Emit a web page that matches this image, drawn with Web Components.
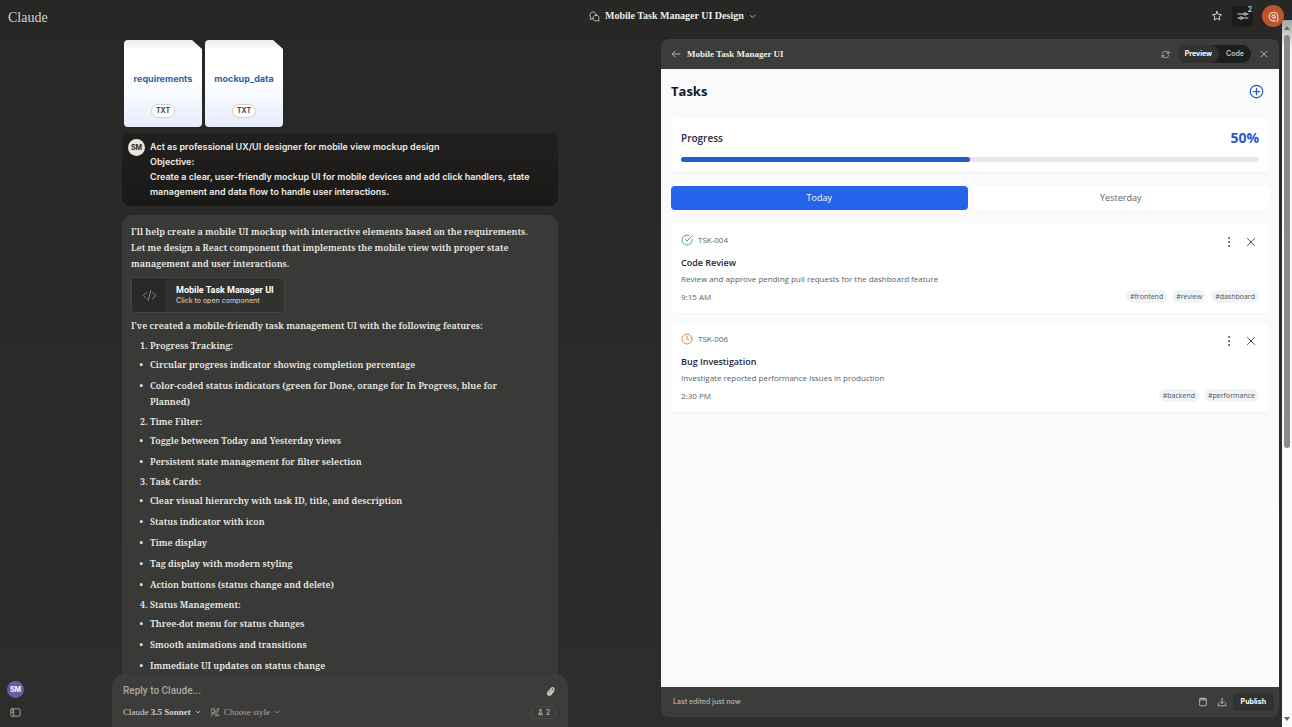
<!DOCTYPE html>
<html lang="en">
<head>
<meta charset="utf-8">
<meta name="viewport" content="width=device-width, initial-scale=1">
<title>Mobile Task Manager UI Design</title>
<style>
  :root {
    --serif: "Noto Serif", "Liberation Serif", serif;
    --title: "Liberation Serif", serif;
    --sans: Inter, "Liberation Sans", sans-serif;
    --app: "Open Sans", "Noto Sans", sans-serif;
    --text: #eeece6;
    --muted: #a9a7a0;
    --surface: #3c3c3a;
    --blue: #2563eb;
  }
  body {
    margin: 0;
    height: 100vh;
    overflow: hidden;
    color: var(--text);
    font: 500 9px/15px var(--sans);
    background: linear-gradient(#272725, #2d2d2b);
  }
</style>
</head>
<body>
<app-shell>
  <top-bar slot="top" heading="Mobile Task Manager UI Design"></top-bar>
  <side-rail slot="side"></side-rail>
  <chat-thread slot="chat">
    <file-card name="requirements" slot="files"></file-card>
    <file-card name="mockup_data" slot="files"></file-card>
    <user-message initials="SM">Act as professional UX/UI designer for mobile view mockup design<br>Objective:<br>Create a clear, user-friendly mockup UI for mobile devices and add click handlers, state management and data flow to handle user interactions.</user-message>
    <assistant-message></assistant-message>
    <reply-box slot="composer"></reply-box>
  </chat-thread>
  <artifact-panel slot="panel" heading="Mobile Task Manager UI">
    <task-app>
      <task-item code="TSK-004" status="done" heading="Code Review" time="9:15 AM" tags="frontend review dashboard">Review and approve pending pull requests for the dashboard feature</task-item>
      <task-item code="TSK-006" status="progress" heading="Bug Investigation" time="2:30 PM" tags="backend performance">Investigate reported performance issues in production</task-item>
    </task-app>
  </artifact-panel>
  <scroll-rail slot="scroll"></scroll-rail>
</app-shell>

<script>
const ICONS = {
  chats: '<path d="M8 17l-5 1 1-4a7 7 0 1 1 12-5"/><path d="M15 9a6 6 0 0 1 6 9l1 4-4-1a6.500 6.500 0 0 1-9-3.500A6.500 6.500 0 0 1 15 9z"/>',
  down: '<path d="M4 8l8 8 8-8"/>',
  star: '<path d="M12 3l2.700 5.800 6.300.7-4.700 4.200 1.300 6.300-5.600-3.200L6.400 20l1.300-6.300L3 9.500l6.300-.7z"/>',
  sliders: '<path d="M2 8h11M19 8h3M2 16h3M11 16h11"/><circle cx="16" cy="8" r="2.500"/><circle cx="8" cy="16" r="2.500"/>',
  chatMark: '<path d="M18 20.500a1.500 1.500 0 0 0 2-1.500v-7a8 8 0 1 0-8 8h3"/><circle cx="12" cy="12" r="3"/><path d="M15 12v3"/>',
  back: '<path d="M21 12H3M10 5l-7 7 7 7"/>',
  refresh: '<path d="M3 10a9 9 0 0 1 16-3l2 2M21 4v5h-5M21 14a9 9 0 0 1-16 3l-2-2M3 20v-5h5"/>',
  close: '<path d="M5 5l14 14M19 5L5 19"/>',
  plus: '<circle cx="12" cy="12" r="10"/><path d="M12 7v10M7 12h10"/>',
  done: '<path d="M22 11v1a10 10 0 1 1-6-9.100"/><path d="M22 4L12 14l-3-3"/>',
  progress: '<circle cx="12" cy="12" r="10"/><path d="M12 6v6l4 2"/>',
  dots: '<g fill="currentColor"><circle cx="12" cy="4" r="1"/><circle cx="12" cy="12" r="1"/><circle cx="12" cy="20" r="1"/></g>',
  code: '<path d="M7 7l-5 5 5 5M17 7l5 5-5 5M14 4l-4 16"/>',
  clip: '<path d="M18 12l-6 7a4 4 0 0 1-6-5l8-9a3 3 0 0 1 5 4l-8 9a1.500 1.500 0 0 1-2-2l6-7"/>',
  style: '<path d="M4 10V4h6v5M3 22c4-8 9-14 18-19l-3 9h-6M3 14h7M13 21h9M10 17h9"/>',
  flask: '<path d="M9 3h6M10 3v7l-5 10h14l-5-10V3M8 15h8"/>',
  sidebar: '<rect x="2" y="4" width="20" height="16" rx="2"/><path d="M8 4v16M4 8h2M4 12h2"/>',
  copy: '<rect x="4" y="4" width="16" height="17" rx="1"/><path d="M4 7h16M8 3h8"/>',
  download: '<path d="M12 3v12M7 11l5 5 5-5M3 15v6h18v-6"/>',
};

const icon = (name, size = 12, stroke = 2) => `
  <svg viewBox="0 0 24 24" width="${size}" height="${size}" fill="none" stroke="currentColor"
    stroke-width="${stroke}" stroke-linecap="round" stroke-linejoin="round" aria-hidden="true">${ICONS[name]}</svg>`;

const BASE = `
  *, *::before { box-sizing: border-box; }
  button, input { font: inherit; color: inherit; border: 0; background: none; padding: 0; margin: 0; }
  button { display: inline-flex; align-items: center; justify-content: center; cursor: pointer; }
  svg { display: block; flex: none; }
  p, h1, h2, h3, ul, ol { margin: 0; padding: 0; font: inherit; }
`;

class BaseElement extends HTMLElement {
  connectedCallback() {
    this.attachShadow({ mode: 'open' });
    this.shadowRoot.innerHTML = `<style>${BASE}</style>${this.render()}`;
  }
  attr(name) {
    return this.getAttribute(name) || '';
  }
}

customElements.define('app-shell', class extends BaseElement {
  render() {
    return `
      <style>
        :host { display: flex; flex-direction: column; height: 100vh; position: relative; }
        .body { flex: 1; min-height: 0; display: flex; padding-right: 13px; }
        .left { flex: 661; min-width: 0; display: flex; }
        .side { width: 112px; flex: none; display: flex; }
        .chat { flex: 1; min-width: 0; display: flex; padding-right: 93px; }
        .panel { flex: 618; min-width: 0; display: flex; padding: 7px 0 10px; }
        ::slotted(*) { flex: 1; min-width: 0; }
        ::slotted([slot="top"]) { flex: none; z-index: 2; }
      </style>
      <slot name="top"></slot>
      <div class="body">
        <div class="left">
          <div class="side"><slot name="side"></slot></div>
          <div class="chat"><slot name="chat"></slot></div>
        </div>
        <div class="panel"><slot name="panel"></slot></div>
      </div>
      <slot name="scroll"></slot>
    `;
  }
});

customElements.define('top-bar', class extends BaseElement {
  render() {
    return `
      <style>
        :host { display: block; }
        header {
          display: grid;
          grid-template-columns: 11fr auto 10fr;
          align-items: center;
          height: 32px;
          padding: 0 8px;
        }
        .brand { font: 400 14px/20px var(--title); color: #d5d3cc; text-decoration: none; padding-top: 3px; }
        .title { gap: 5px; font: 700 10px/16px var(--title); }
        .title svg { color: #c9c7c0; }
        .actions { display: flex; justify-content: flex-end; align-items: center; gap: 9px; color: #d5d3cc; }
        .tools { position: relative; width: 21px; height: 21px; border-radius: 4px; background: #1c1c1a; }
        .badge { position: absolute; top: 0; right: 1px; font-size: 7px; line-height: 8px; font-weight: 600; }
        .me { width: 22px; height: 22px; border-radius: 50%; background: #b9562d; color: #f0d9cc; }
      </style>
      <header>
        <a class="brand" href="#">Claude</a>
        <button class="title">${icon('chats', 11)}<span>${this.attr('heading')}</span>${icon('down', 7, 3)}</button>
        <div class="actions">
          <button aria-label="Star chat">${icon('star', 12)}</button>
          <button class="tools" aria-label="Chat controls">${icon('sliders', 12)}<span class="badge">2</span></button>
          <button class="me" aria-label="Account">${icon('chatMark', 13)}</button>
        </div>
      </header>
    `;
  }
});

customElements.define('side-rail', class extends BaseElement {
  render() {
    return `
      <style>
        :host { display: flex; flex-direction: column; justify-content: flex-end; align-items: flex-start; }
        nav { display: flex; flex-direction: column; align-items: center; gap: 9px; padding: 0 0 9px 7px; }
        .user { width: 17px; height: 17px; border-radius: 50%; background: #6a5aa8; color: #fff; font: 700 7px/17px var(--sans); }
        .toggle { color: var(--muted); }
      </style>
      <nav>
        <button class="user">SM</button>
        <button class="toggle" aria-label="Open sidebar">${icon('sidebar', 11)}</button>
      </nav>
    `;
  }
});

customElements.define('chat-thread', class extends BaseElement {
  render() {
    return `
      <style>
        :host { display: flex; flex-direction: column; }
        .scroll { flex: 1; min-height: 0; overflow: hidden; padding: 8px 10px 0; }
        .files { display: flex; gap: 3px; padding-left: 2px; margin-bottom: 6px; }
      </style>
      <div class="scroll">
        <div class="files"><slot name="files"></slot></div>
        <slot></slot>
      </div>
      <slot name="composer"></slot>
    `;
  }
});

customElements.define('file-card', class extends BaseElement {
  render() {
    return `
      <style>
        :host { display: block; }
        button {
          flex-direction: column;
          justify-content: space-between;
          width: 78px;
          height: 87px;
          padding: 31px 4px 9px;
          border-radius: 4px;
          background: linear-gradient(#ebebe9, #fff 12%, #fff 45%, #e6edfa);
          clip-path: polygon(0 0, 68px 0, 100% 9px, 100% 100%, 0 100%);
        }
        .name { color: #1f66a8; font: 700 9px/15px var(--sans); }
        .type {
          padding: 0 4px;
          border: 1px solid #cfcfcb;
          border-radius: 7px;
          background: #fff;
          color: #4b4a46;
          font: 700 7px/12px var(--sans);
        }
      </style>
      <button><span class="name">${this.attr('name')}</span><span class="type">TXT</span></button>
    `;
  }
});

customElements.define('user-message', class extends BaseElement {
  render() {
    return `
      <style>
        :host {
          display: flex;
          align-items: flex-start;
          gap: 5px;
          padding: 6px;
          margin-bottom: 9px;
          border-radius: 8px;
          background: linear-gradient(#21201e, #1a1917);
          font-weight: 600;
        }
        .avatar {
          flex: none;
          width: 17px;
          height: 17px;
          border-radius: 50%;
          background: #e8e6e0;
          color: #262624;
          text-align: center;
          font: 700 7px/17px var(--sans);
        }
        p { padding-bottom: 1px; }
      </style>
      <span class="avatar">${this.attr('initials')}</span>
      <p><slot></slot></p>
    `;
  }
});

const FEATURES = [
  ['Progress Tracking:', [
    'Circular progress indicator showing completion percentage',
    'Color-coded status indicators (green for Done, orange for In Progress, blue for Planned)',
  ]],
  ['Time Filter:', [
    'Toggle between Today and Yesterday views',
    'Persistent state management for filter selection',
  ]],
  ['Task Cards:', [
    'Clear visual hierarchy with task ID, title, and description',
    'Status indicator with icon',
    'Time display',
    'Tag display with modern styling',
    'Action buttons (status change and delete)',
  ]],
  ['Status Management:', [
    'Three-dot menu for status changes',
    'Smooth animations and transitions',
    'Immediate UI updates on status change',
  ]],
];

customElements.define('assistant-message', class extends BaseElement {
  render() {
    const list = FEATURES.map(([title, points]) => `
      <li>${title}<ul>${points.map((point) => `<li>${point}</li>`).join('')}</ul></li>`).join('');
    return `
      <style>
        :host {
          display: block;
          padding: 9px 30px 30px 9px;
          border-radius: 10px 10px 0 0;
          background: #393937;
          font: 600 9px/16px var(--serif);
        }
        .artifact {
          display: flex;
          width: 154px;
          height: 36px;
          margin: 5px 0;
          border: 1px solid #454542;
          border-radius: 4px;
          overflow: hidden;
          background: #31312f;
          text-align: left;
        }
        .mark { display: flex; align-items: center; justify-content: center; width: 34px; align-self: stretch; background: #282826; color: #c9c7c0; }
        .label { flex: 1; padding-left: 10px; }
        .label b { display: block; font: 700 9px/11px Roboto, sans-serif; color: #fff; white-space: nowrap; }
        .label small { display: block; font: 500 7px/10px var(--sans); color: #c3c1ba; }
        ol { padding-left: 19px; margin-top: 4px; }
        ol > li { margin-top: 4px; }
        ul { margin-top: 3px; list-style: "•   "; }
        ul li + li { margin-top: 5px; }
      </style>
      <p>I'll help create a mobile UI mockup with interactive elements based on the requirements. Let me design a React component that implements the mobile view with proper state management and user interactions.</p>
      <button class="artifact">
        <span class="mark">${icon('code', 15, 1)}</span>
        <span class="label"><b>Mobile Task Manager UI</b><small>Click to open component</small></span>
      </button>
      <p>I've created a mobile-friendly task management UI with the following features:</p>
      <ol>${list}</ol>
    `;
  }
});

customElements.define('reply-box', class extends BaseElement {
  render() {
    return `
      <style>
        :host { display: block; }
        form { padding: 9px 12px 7px 11px; border-radius: 12px 12px 0 0; background: var(--surface); }
        .row { display: flex; align-items: center; height: 16px; }
        .row + .row { margin-top: 5px; gap: 9px; font: 700 9px/16px var(--title); }
        input { flex: 1; min-width: 0; outline: 0; font: 500 10px/16px Roboto, sans-serif; }
        input::placeholder { color: var(--muted); opacity: 1; }
        .row button { gap: 4px; }
        .model { color: #d5d3cc; }
        .model span { font-weight: 400; }
        .style { color: var(--muted); font-weight: 400; }
        .count { margin-left: auto; padding: 0 5px; border: 1px solid #4a4a47; border-radius: 4px; color: var(--muted); font: 600 7px/11px var(--sans); }
        .row .count { gap: 2px; }
        .clip { color: #c9c7c0; }
      </style>
      <form>
        <div class="row">
          <input type="text" aria-label="Reply" placeholder="Reply to Claude...">
          <button type="button" class="clip" aria-label="Attach file">${icon('clip', 11, 3)}</button>
        </div>
        <div class="row">
          <button type="button" class="model"><div><span>Claude</span> 3.5 Sonnet</div>${icon('down', 6, 3)}</button>
          <button type="button" class="style">${icon('style', 10)}Choose style${icon('down', 6, 3)}</button>
          <button type="button" class="count" aria-label="Experiments">${icon('flask', 7, 3)}2</button>
        </div>
      </form>
    `;
  }
});

customElements.define('artifact-panel', class extends BaseElement {
  render() {
    return `
      <style>
        :host { display: flex; flex-direction: column; border-radius: 8px; background: var(--surface); overflow: hidden; }
        header, footer { display: flex; align-items: center; height: 30px; padding: 0 10px; flex: none; }
        h2 { flex: 1; margin-left: 6px; font: 700 9px/16px var(--title); }
        header button { color: #c9c7c0; }
        .switch { display: flex; height: 18px; margin: 0 8px; border-radius: 9px; background: #1e1e1c; font: 600 7px/18px var(--sans); }
        .switch button { padding: 0 7px; border-radius: 9px; }
        .switch .on { background: #32322f; color: #fff; font-weight: 700; }
        main { flex: 1; min-height: 0; overflow: hidden; background: #f9fafc; color: #1f2937; }
        footer { padding: 0 5px 0 12px; gap: 9px; font: 600 7px/16px var(--sans); color: var(--muted); }
        footer p { flex: 1; }
        footer button { color: #c9c7c0; }
        footer .publish { height: 18px; padding: 0 8px; margin-left: -3px; border-radius: 4px; background: #31312f; color: #fff; font-weight: 700; }
      </style>
      <header>
        <button aria-label="Back">${icon('back', 10)}</button>
        <h2>${this.attr('heading')}</h2>
        <button aria-label="Refresh">${icon('refresh', 9)}</button>
        <div class="switch">
          <button class="on" aria-pressed="true">Preview</button>
          <button aria-pressed="false">Code</button>
        </div>
        <button aria-label="Close">${icon('close', 10)}</button>
      </header>
      <main><slot></slot></main>
      <footer>
        <p>Last edited just now</p>
        <button aria-label="Copy">${icon('copy', 10)}</button>
        <button aria-label="Download">${icon('download', 10)}</button>
        <button class="publish">Publish</button>
      </footer>
    `;
  }
});

customElements.define('task-app', class extends BaseElement {
  render() {
    return `
      <style>
        :host { display: block; padding: 10px; font: 400 9px/16px var(--app); }
        .head { display: flex; align-items: center; justify-content: space-between; height: 24px; }
        h1 { font: 700 13px/20px var(--app); color: #0f1729; }
        .add { margin-right: 5px; color: #2a5ac7; }
        .progress { margin-top: 15px; padding: 10px; border-radius: 5px; background: #fff; box-shadow: 0 1px 2px rgba(15, 23, 42, 0.04); }
        .line { display: flex; align-items: center; justify-content: space-between; height: 20px; margin-bottom: 9px; }
        .line h2 { font: 600 10px/16px var(--app); }
        .line output { font: 700 14px/20px var(--app); color: #2a5ac7; }
        .bar { height: 5px; border-radius: 3px; background: #e5e7eb; }
        .bar div { width: 50%; height: 5px; border-radius: 3px; background: #2459cf; }
        .tabs { display: flex; gap: 5px; margin: 14px 0; }
        .tabs button { flex: 1; height: 24px; border-radius: 4px; background: #fff; color: #5b6470; }
        .tabs .on { background: var(--blue); color: #fff; }
        .list { display: flex; flex-direction: column; gap: 10px; }
      </style>
      <div class="head">
        <h1>Tasks</h1>
        <button class="add" aria-label="Add task">${icon('plus', 15)}</button>
      </div>
      <section class="progress">
        <div class="line"><h2>Progress</h2><output>50%</output></div>
        <div class="bar" role="progressbar" aria-valuenow="50" aria-label="Progress"><div></div></div>
      </section>
      <div class="tabs">
        <button class="on" aria-pressed="true">Today</button>
        <button aria-pressed="false">Yesterday</button>
      </div>
      <div class="list"><slot></slot></div>
    `;
  }
});

customElements.define('task-item', class extends BaseElement {
  render() {
    const tags = this.attr('tags').split(' ').map((tag) => `<li>#${tag}</li>`).join('');
    return `
      <style>
        :host { display: block; padding: 10px; border-radius: 5px; background: #fff; box-shadow: 0 1px 2px rgba(15, 23, 42, 0.04); color: #56606c; font: 400 8px/16px var(--app); }
        .top, .bottom { display: flex; justify-content: space-between; }
        .id { display: flex; align-items: center; gap: 5px; height: 12px; }
        .done { color: #3fae74; }
        .progress { color: #dd8a3c; }
        .actions { display: flex; gap: 10px; height: 16px; padding-right: 2px; color: #4b5563; }
        h3 { margin-top: 5px; font: 600 9px/16px var(--app); color: #1f2937; }
        .bottom { align-items: center; height: 13px; margin-top: 3px; }
        ul { display: flex; gap: 5px; list-style: none; }
        li { padding: 0 4px; border-radius: 7px; background: #f1f3f5; color: #4b5563; font-size: 7px; line-height: 13px; }
      </style>
      <div class="top">
        <div class="id"><span class="${this.attr('status')}">${icon(this.attr('status'), 12)}</span>${this.attr('code')}</div>
        <div class="actions">
          <button aria-label="Change status">${icon('dots', 12)}</button>
          <button aria-label="Delete task">${icon('close', 12)}</button>
        </div>
      </div>
      <h3>${this.attr('heading')}</h3>
      <p><slot></slot></p>
      <div class="bottom"><time>${this.attr('time')}</time><ul>${tags}</ul></div>
    `;
  }
});

// page scrollbar, lies over the right edge of the shell
customElements.define('scroll-rail', class extends BaseElement {
  render() {
    return `
      <style>
        :host { position: absolute; top: 20px; right: 0; bottom: 0; width: 10px; display: flex; flex-direction: column; align-items: center; background: linear-gradient(#a5a5a5, #fafafa 30px); }
        .track { flex: 1; width: 6px; }
        .thumb { height: 61%; border-radius: 3px; background: #8a8a8a; }
        svg { height: 15px; }
      </style>
      <svg viewBox="0 0 8 15" width="8" fill="#666"><path d="M1 10h6L4 6z"/></svg>
      <div class="track"><div class="thumb"></div></div>
      <svg viewBox="0 0 8 15" width="8" fill="#666"><path d="M1 5h6L4 9z"/></svg>
    `;
  }
});
</script>
</body>
</html>
